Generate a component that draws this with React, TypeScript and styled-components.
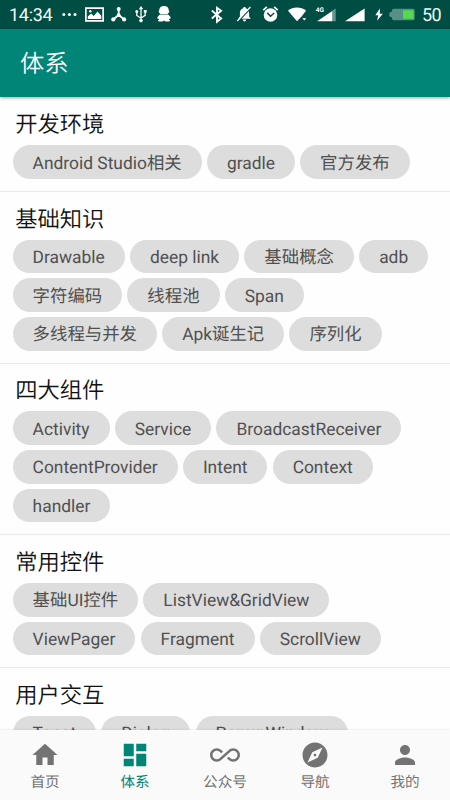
import React from 'react';
import styled, { createGlobalStyle } from 'styled-components';

const GlobalStyle = createGlobalStyle`
  * { box-sizing: border-box; }
  body {
    margin: 0;
    font-family: Roboto, "Noto Sans CJK SC", sans-serif;
    background: #fff;
    text-rendering: geometricPrecision;
  }
`;

const Screen = styled.div`
  display: flex;
  flex-direction: column;
  width: 450px;
  height: 800px;
  overflow: hidden;
  background: #fefefe;
`;

const StatusBar = styled.header`
  display: flex;
  flex: none;
  align-items: center;
  justify-content: space-between;
  height: 29px;
  padding: 0 8px 0 9px;
  background: #004d43;
  color: #eef8f6;
  font-size: 18px;
  line-height: 28px;
`;

const StatusGroup = styled.div`
  display: flex;
  align-items: center;
  height: 29px;
`;

const StatusIcon = styled.svg<{ $gap: number }>`
  display: block;
  flex: none;
  margin-left: ${(p) => p.$gap}px;
  overflow: visible;
  fill: #fff;
`;

const Clock = styled.span`
  width: 43px;
  padding-top: 2px;
  letter-spacing: -0.3px;
  white-space: nowrap;
`;

const BatteryLevel = styled.span`
  width: 20px;
  margin-left: 7px;
  padding-top: 2px;
  letter-spacing: -0.5px;
`;

const SignalLabel = styled.text`
  font: 700 6.5px Roboto, sans-serif;
`;

const AppBar = styled.div`
  display: flex;
  flex: none;
  align-items: center;
  height: 68px;
  padding: 2px 0 0 20px;
  background: #008577;
  box-shadow: 0 1px 3px rgba(0, 0, 0, 0.35);
  color: #fff;
  z-index: 1;
`;

const AppTitle = styled.h1`
  margin: 0;
  font-size: 24.3px;
  font-weight: 350;
  line-height: 36px;
`;

const Content = styled.main`
  flex: 1;
  min-height: 0;
  padding-top: 0.9px;
  overflow: hidden;
`;

const Section = styled.section`
  padding: 9.3px 12.6px 12.2px;
  border-bottom: 1px solid #e9e9e9;
`;

const SectionTitle = styled.h2`
  height: 38.3px;
  margin: 0 0 0 2.6px;
  color: #111;
  font-size: 22.3px;
  font-weight: 350;
  line-height: 37px;
`;

const Chips = styled.div`
  display: flex;
  flex-wrap: wrap;
  gap: 5px 5.2px;
`;

const Chip = styled.span`
  display: flex;
  align-items: center;
  height: 33.6px;
  padding: 3px 20px 0;
  border-radius: 17px;
  background: #ddd;
  color: #505050;
  font-size: 17.4px;
  line-height: 26px;
  white-space: nowrap;
`;

const NavBar = styled.nav`
  display: grid;
  flex: none;
  grid-template-columns: repeat(5, 1fr);
  height: 70px;
  background: #fafafa;
  box-shadow: 0 -1px 2px rgba(0, 0, 0, 0.06);
  z-index: 1;
`;

const NavItem = styled.a<{ $active: boolean }>`
  display: flex;
  flex-direction: column;
  align-items: center;
  padding-top: 10px;
  color: ${(p) => (p.$active ? '#008577' : '#737373')};
  font-size: 14.6px;
  line-height: 22px;
`;

const NavIcon = styled.svg`
  width: 30px;
  height: 30px;
  margin-bottom: 1px;
  fill: currentColor;
`;

const sections = [
  { title: '开发环境', tags: ['Android Studio相关', 'gradle', '官方发布'] },
  {
    title: '基础知识',
    tags: ['Drawable', 'deep link', '基础概念', 'adb', '字符编码', '线程池', 'Span', '多线程与并发', 'Apk诞生记', '序列化'],
  },
  {
    title: '四大组件',
    tags: ['Activity', 'Service', 'BroadcastReceiver', 'ContentProvider', 'Intent', 'Context', 'handler'],
  },
  { title: '常用控件', tags: ['基础UI控件', 'ListView&GridView', 'ViewPager', 'Fragment', 'ScrollView'] },
  { title: '用户交互', tags: ['Toast', 'Dialog', 'PopupWindow'] },
];

const navItems = [
  { label: '首页', path: 'M10 20v-6h4v6h5v-8h3L12 3 2 12h3v8z' },
  { label: '体系', path: 'M3 13h8V3H3v10zm0 8h8v-6H3v6zm10 0h8V11h-8v10zm0-18v6h8V3h-8z' },
  {
    label: '公众号',
    path: 'M18.6 6.62c-1.44 0-2.8.56-3.77 1.53L12 10.66 10.48 12h.01L7.8 14.39c-.64.64-1.49.99-2.4.99-1.87 0-3.39-1.51-3.39-3.38S3.53 8.62 5.4 8.62c.91 0 1.76.35 2.44 1.03l1.13 1 1.51-1.34L9.22 8.2C8.2 7.18 6.84 6.62 5.4 6.62 2.42 6.62 0 9.04 0 12s2.42 5.38 5.4 5.38c1.44 0 2.8-.56 3.77-1.53l2.83-2.5.01.01L13.52 12h-.01l2.69-2.39c.64-.64 1.49-.99 2.4-.99 1.87 0 3.39 1.51 3.39 3.38s-1.52 3.38-3.39 3.38c-.9 0-1.76-.35-2.44-1.03l-1.14-1.01-1.51 1.34 1.27 1.12c1.02 1.01 2.37 1.57 3.82 1.57 2.98 0 5.4-2.41 5.4-5.38s-2.42-5.37-5.4-5.37z',
  },
  {
    label: '导航',
    path: 'M12 10.9c-.61 0-1.1.49-1.1 1.1s.49 1.1 1.1 1.1c.61 0 1.1-.49 1.1-1.1s-.49-1.1-1.1-1.1zM12 2C6.48 2 2 6.48 2 12s4.48 10 10 10 10-4.48 10-10S17.52 2 12 2zm2.19 12.19L6 18l3.81-8.19L18 6l-3.81 8.19z',
  },
  {
    label: '我的',
    path: 'M12 12c2.21 0 4-1.79 4-4s-1.79-4-4-4-4 1.79-4 4 1.79 4 4 4zm0 2c-2.67 0-8 1.34-8 4v2h16v-2c0-2.66-5.33-4-8-4z',
  },
];

const NotificationIcons = () => (
  <>
    <StatusIcon $gap={9.5} width="16" height="16" viewBox="0 0 16 16">
      <circle cx="1.8" cy="7.5" r="1.5" />
      <circle cx="7.4" cy="7.5" r="1.5" />
      <circle cx="13" cy="7.5" r="1.5" />
    </StatusIcon>
    <StatusIcon $gap={7} width="19" height="16" viewBox="0 0 19 16">
      <path fillRule="evenodd" d="M0 .3h19v14.5H0zM1.7 2v11.1h15.6V2z" />
      <path d="M2.8 12V9.5l3.4-3 2.5 2.4 3.8-4.4 3.8 4.3V12z" />
      <circle cx="5.3" cy="4.3" r="1.2" />
    </StatusIcon>
    <StatusIcon $gap={7.5} width="16" height="16" viewBox="0 0 16 16">
      <path d="M7.7 2.5v6M7.7 8 2.5 12.2M7.7 8l5.2 4.2" stroke="#fff" strokeWidth="1.8" />
      <circle cx="7.7" cy="2" r="2" />
      <circle cx="7.7" cy="8.2" r="1.9" />
      <circle cx="2.3" cy="12.4" r="2.1" />
      <circle cx="13.1" cy="12.4" r="2.1" />
    </StatusIcon>
    <StatusIcon $gap={8} width="12" height="17" viewBox="0 0 12 17">
      <path d="M6 2v13M1.8 5.5v4L6 12.2M10.2 5.5v3.8L6 12" fill="none" stroke="#fff" strokeWidth="1.3" />
      <path d="M6 0l2.2 3.3H3.8zM8.8 4h2.8v2.8H8.8z" />
      <circle cx="1.8" cy="5.5" r="1.5" />
      <circle cx="6" cy="14.6" r="1.8" />
    </StatusIcon>
    <StatusIcon $gap={10} width="14" height="17" viewBox="0 0 14 17">
      <path d="M7 0c3.2 0 4.9 2 4.8 4.6.6.6.7 1.3.2 2L10.4 8H3.6L2 6.6c-.5-.7-.4-1.4.2-2C2.1 2 3.8 0 7 0z" />
      <path d="M2.7 8.5h8.6l2.3 2.7c.4 1.1-.2 1.7-1 1.4l-.6.8c1.6 1 .7 2.2-.8 2.2H8.4L7 14.5l-1.4 1.1H2.8c-1.5 0-2.4-1.2-.8-2.2l-.6-.8c-.8.3-1.4-.3-1-1.4z" />
    </StatusIcon>
  </>
);

const SystemIcons = () => (
  <>
    <StatusIcon $gap={0} width="12" height="16" viewBox="0 0 12 16">
      <path d="M.8 3.5l9.3 8L6 14.7V.8l4.1 3L.8 11.5" fill="none" stroke="#fff" strokeWidth="1.9" />
    </StatusIcon>
    <StatusIcon $gap={14.5} width="15" height="16" viewBox="0 0 15 16">
      <path d="M7.5 0c.9 0 1.3.5 1.3 1.3 2.4.7 3.3 2.5 3.3 4.8v3.4l1.6 2.2H1.3l1.6-2.2V6.1C2.9 3.8 4 2 6.2 1.3 6.2.5 6.6 0 7.5 0zM5.8 12.6h3.4c0 2.4-3.4 2.4-3.4 0z" />
      <path d="M14 .8.9 14.8" stroke="#004d43" strokeWidth="1.6" />
      <path d="M13.4 0 .3 14" stroke="#fff" strokeWidth="1.2" />
    </StatusIcon>
    <StatusIcon $gap={10} width="17" height="17" viewBox="0 0 17 17">
      <circle cx="8.5" cy="9" r="6.8" />
      <path d="M1.2 4.1 4.9.8M15.8 4.1 12.1.8" stroke="#fff" strokeWidth="1.6" />
      <path d="M5.2 6.9l3.3 3.3 3.7-3.2" fill="none" stroke="#004d43" strokeWidth="1.5" />
    </StatusIcon>
    <StatusIcon $gap={9} width="19" height="16" viewBox="0 0 19 16">
      <path d="M0 3.7C4.8-.7 13.2-.7 18 3.7l-4.2 5.5L9 14.3z" />
      <path d="M14.3 11.2h4l-2 2.2z" />
    </StatusIcon>
    <StatusIcon $gap={9} width="21" height="16" viewBox="0 0 21 16">
      <path d="M16.3 3.4 19.7 1.5v12.7h-3.4z" opacity=".4" />
      <path d="M1.1 14.2 16.3 3.9v10.3z" />
      <SignalLabel x="-.3" y="5.4">4G</SignalLabel>
    </StatusIcon>
    <StatusIcon $gap={8} width="20" height="16" viewBox="0 0 20 16">
      <path d="M0 14.2 19.6 1.5v12.7z" />
    </StatusIcon>
    <StatusIcon $gap={10} width="8" height="14" viewBox="0 0 8 14">
      <path d="M5 .5.3 7.2h2.9L2.1 12.7 7.8 5.7H4.7z" />
    </StatusIcon>
    <StatusIcon $gap={6} width="26" height="12" viewBox="0 0 26 12">
      <path d="M4.5-.2H24q1.7 0 1.7 1.7v8q0 1.7-1.7 1.7H4.5Q3 11.2 3 9.5v-1L.3 7.2V3.8L3 2.5v-1Q3-.2 4.5-.2z" fill="#588f87" />
      <rect x="14" y="1.3" width="10.5" height="8.4" rx=".8" fill="#57d94d" />
    </StatusIcon>
  </>
);

export default function App() {
  return (
    <>
      <GlobalStyle />
      <Screen>
        <StatusBar>
          <StatusGroup>
            <Clock>14:34</Clock>
            <NotificationIcons />
          </StatusGroup>
          <StatusGroup>
            <SystemIcons />
            <BatteryLevel>50</BatteryLevel>
          </StatusGroup>
        </StatusBar>
        <AppBar>
          <AppTitle>体系</AppTitle>
        </AppBar>
        <Content>
          {sections.map((section) => (
            <Section key={section.title}>
              <SectionTitle>{section.title}</SectionTitle>
              <Chips>
                {section.tags.map((tag) => (
                  <Chip key={tag}>{tag}</Chip>
                ))}
              </Chips>
            </Section>
          ))}
        </Content>
        <NavBar>
          {navItems.map((item) => (
            <NavItem key={item.label} $active={item.label === '体系'}>
              <NavIcon viewBox="0 0 24 24">
                <path d={item.path} />
              </NavIcon>
              {item.label}
            </NavItem>
          ))}
        </NavBar>
      </Screen>
    </>
  );
}
